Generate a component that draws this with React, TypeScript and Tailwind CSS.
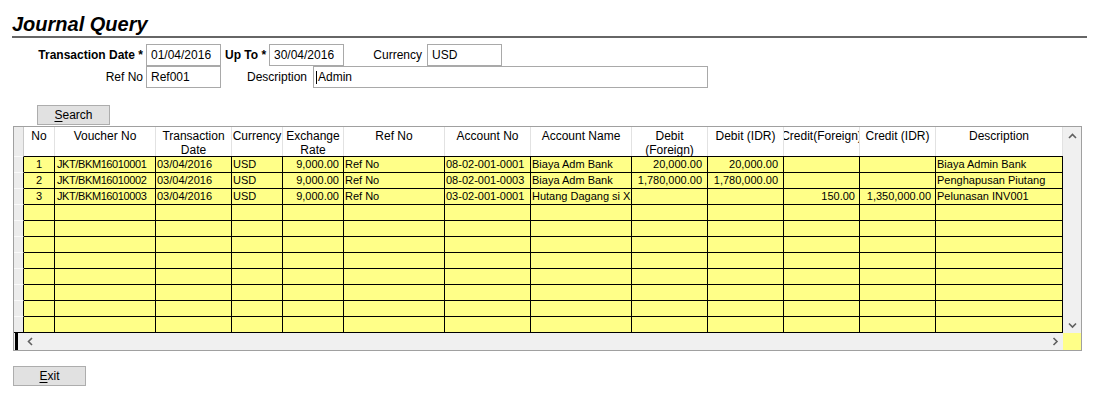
import React from "react";

type Col = { w: string; h: string[]; a: string };

const cols: Col[] = [
  { w: "w-[31px]", h: ["No"], a: "justify-center" },
  { w: "w-[101px]", h: ["Voucher No"], a: "justify-start pl-[2px] tracking-[-0.4px]" },
  { w: "w-[76px]", h: ["Transaction", "Date"], a: "justify-start pl-[1px]" },
  { w: "w-[51px]", h: ["Currency"], a: "justify-start pl-[1px]" },
  { w: "w-[61px]", h: ["Exchange", "Rate"], a: "justify-end pr-[4px]" },
  { w: "w-[101px]", h: ["Ref No"], a: "justify-start pl-[1px]" },
  { w: "w-[86px]", h: ["Account No"], a: "justify-start pl-[1px]" },
  { w: "w-[101px]", h: ["Account Name"], a: "justify-start pl-[1px]" },
  { w: "w-[76px]", h: ["Debit", "(Foreign)"], a: "justify-end pr-[5px]" },
  { w: "w-[76px]", h: ["Debit (IDR)"], a: "justify-end pr-[5px]" },
  { w: "w-[76px]", h: ["Credit(Foreign)"], a: "justify-end pr-[4px]" },
  { w: "w-[76px]", h: ["Credit (IDR)"], a: "justify-end pr-[4px]" },
  { w: "w-[127px]", h: ["Description"], a: "justify-start pl-[1px]" },
];

const rows: string[][] = [
  ["1", "JKT/BKM16010001", "03/04/2016", "USD", "9,000.00", "Ref No", "08-02-001-0001", "Biaya Adm Bank", "20,000.00", "20,000.00", "", "", "Biaya Admin Bank"],
  ["2", "JKT/BKM16010002", "03/04/2016", "USD", "9,000.00", "Ref No", "08-02-001-0003", "Biaya Adm Bank", "1,780,000.00", "1,780,000.00", "", "", "Penghapusan Piutang"],
  ["3", "JKT/BKM16010003", "03/04/2016", "USD", "9,000.00", "Ref No", "03-02-001-0001", "Hutang Dagang si X", "", "", "150.00", "1,350,000.00", "Pelunasan INV001"],
  ...Array.from({ length: 8 }, () => Array(13).fill("")),
];

const Chevron = ({ dir }: { dir: "up" | "down" | "left" | "right" }) => {
  const d =
    dir === "up"
      ? "M1 5 L4.5 1.5 L8 5"
      : dir === "down"
      ? "M1 1.5 L4.5 5 L8 1.5"
      : dir === "left"
      ? "M5 1 L1.5 4.5 L5 8"
      : "M1.5 1 L5 4.5 L1.5 8";
  const w = dir === "up" || dir === "down" ? 9 : 7;
  const h = dir === "up" || dir === "down" ? 7 : 9;
  return (
    <svg width={w} height={h} viewBox={`0 0 ${w} ${h}`}>
      <path d={d} fill="none" stroke="#606060" strokeWidth="1.6" />
    </svg>
  );
};

const Input = ({ w, value, caret }: { w: string; value: string; caret?: boolean }) => (
  <div className={`${w} h-[22px] shrink-0 border border-[#a9a9a9] bg-white flex items-center pl-[4px] text-[12px]`}>
    {caret && <span className="w-px h-[13px] bg-black mr-[1px] -ml-[2px]" />}
    {value}
  </div>
);

const Btn = ({ first, rest }: { first: string; rest: string }) => (
  <div className="w-[73px] h-[20px] border border-[#adadad] bg-[#e1e1e1] flex items-center justify-center text-[12px]">
    <span className="underline underline-offset-2">{first}</span>
    {rest}
  </div>
);

export default function App() {
  return (
    <div className="w-[1100px] h-[400px] bg-white text-black pl-[12px] font-['Liberation_Sans',Arial,sans-serif] overflow-hidden">
      {/* Title */}
      <div className="w-[1075px] h-[38px] border-b-2 border-[#666666] pt-[12px]">
        <div className="text-[20px] leading-[24px] font-bold italic">Journal Query</div>
      </div>

      {/* Form */}
      <div className="mt-[6px] flex flex-col text-[12px]">
        <div className="flex h-[22px] items-center">
          <div className="w-[134px] text-right pr-[3px] font-bold">Transaction Date *</div>
          <Input w="w-[75px]" value="01/04/2016" />
          <div className="w-[48px] pl-[4px] font-bold">Up To *</div>
          <Input w="w-[75px]" value="30/04/2016" />
          <div className="w-[83px] text-right pr-[5px]">Currency</div>
          <Input w="w-[75px]" value="USD" />
        </div>
        <div className="flex h-[22px] items-center">
          <div className="w-[134px] text-right pr-[3px]">Ref No</div>
          <Input w="w-[75px]" value="Ref001" />
          <div className="w-[92px] text-right pr-[6px]">Description</div>
          <Input w="w-[395px]" value="Admin" caret />
        </div>
      </div>

      {/* Search */}
      <div className="mt-[17px] ml-[25px]">
        <Btn first="S" rest="earch" />
      </div>

      {/* Grid */}
      <div className="mt-[1px] ml-[1px] w-[1069px] border border-[#a0a0a0] flex flex-col">
        <div className="flex">
          <div className="w-[1049px] flex flex-col">
            {/* header */}
            <div className="flex h-[29px] bg-white">
              <div className="w-[10px] shrink-0 bg-[#ececec] border-r border-[#c8c8c8]" />
              {cols.map((c, i) => (
                <div
                  key={i}
                  className={`${c.w} shrink-0 border-r border-[#e2e2e2] flex flex-col items-center overflow-hidden pt-[2px] text-[12px] leading-[14px]`}
                >
                  {c.h.map((t, j) => (
                    <span key={j} className="whitespace-nowrap">{t}</span>
                  ))}
                </div>
              ))}
            </div>
            {/* data */}
            {rows.map((r, ri) => {
              const last = ri === rows.length - 1;
              return (
                <div key={ri} className={`flex ${last ? "h-[17px]" : "h-[16px]"}`}>
                  <div
                    className={`w-[10px] shrink-0 bg-[#ececec] border-r border-t border-r-black border-t-[#fafafa] ${last ? "border-b border-b-black" : ""}`}
                  />
                  {cols.map((c, ci) => (
                    <div
                      key={ci}
                      className={`${c.w} shrink-0 bg-[#ffff88] border-r border-t border-black ${last ? "border-b" : ""} flex items-center ${c.a} overflow-hidden whitespace-nowrap text-[11px] leading-[15px]`}
                    >
                      {r[ci]}
                    </div>
                  ))}
                </div>
              );
            })}
          </div>
          {/* vertical scrollbar */}
          <div className="w-[18px] bg-[#f0f0f0] flex flex-col items-center justify-between pt-[6px] pb-[4px]">
            <Chevron dir="up" />
            <Chevron dir="down" />
          </div>
        </div>
        {/* horizontal scrollbar */}
        <div className="flex h-[17px]">
          <div className="w-[1049px] bg-[#f0f0f0] flex items-center">
            <div className="w-[3px] h-full bg-black ml-[1px]" />
            <div className="ml-[9px] flex items-center">
              <Chevron dir="left" />
            </div>
            <div className="ml-auto mr-[4px] flex items-center">
              <Chevron dir="right" />
            </div>
          </div>
          <div className="w-[18px] bg-[#ffff88]" />
        </div>
      </div>

      {/* Exit */}
      <div className="mt-[15px] ml-[1px]">
        <Btn first="E" rest="xit" />
      </div>
    </div>
  );
}
